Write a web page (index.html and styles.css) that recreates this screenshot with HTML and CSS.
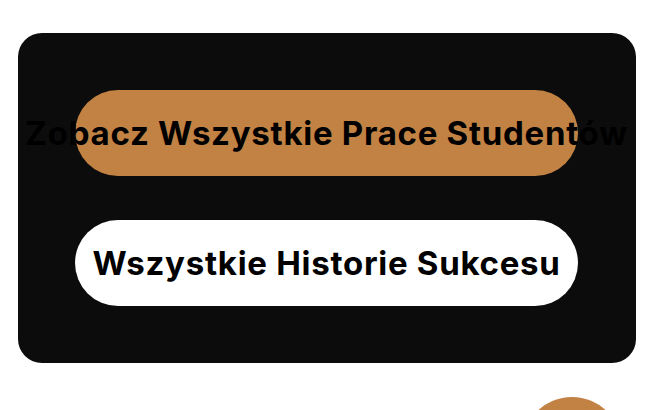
FILE: index.html
```html
<!DOCTYPE html>
<html lang="pl">
<head>
<meta charset="utf-8">
<link rel="stylesheet" href="styles.css">
</head>
<body>
<section class="card">
  <a class="pill pill-orange">Zobacz Wszystkie Prace Studentów</a>
  <a class="pill pill-white">Wszystkie Historie Sukcesu</a>
</section>
<div class="fab"></div>
</body>
</html>
```
FILE: styles.css
```css
html, body {
  margin: 0;
  padding: 0;
  background: #ffffff;
  overflow: hidden;
  height: 410px;
}
body {
  font-family: Inter, "Noto Sans", sans-serif;
  position: relative;
  box-sizing: border-box;
  padding: 33px 10px 0 18px;
}
.card {
  width: 618px;
  box-sizing: border-box;
  height: 330px;
  background: #0c0c0c;
  border-radius: 24px;
  padding: 57px 57px;
  display: flex;
  flex-direction: column;
  gap: 44px;
}
.pill {
  height: 86px;
  width: 503px;
  border-radius: 43px;
  display: flex;
  align-items: center;
  justify-content: center;
  white-space: nowrap;
  font-size: 33px;
  font-weight: 700;
  color: #000;
  letter-spacing: 0.72px;
}
.pill-orange {
  background: #c28243;
}
.pill-white {
  background: #ffffff;
}
.fab {
  position: absolute;
  left: 522px;
  top: 397px;
  width: 100px;
  height: 100px;
  border-radius: 50%;
  background: #c28243;
}
```
